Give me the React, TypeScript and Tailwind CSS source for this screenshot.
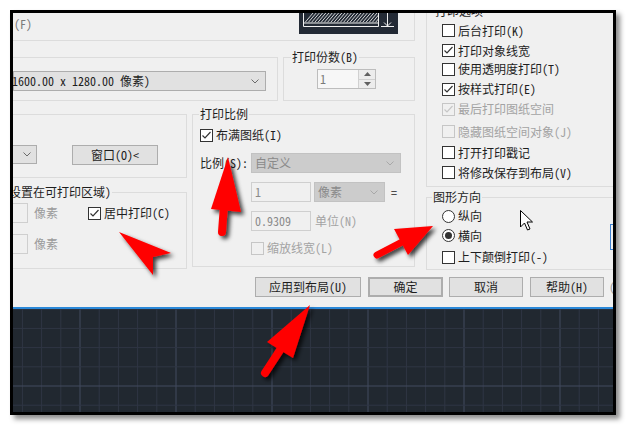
import React from "react";

function Chevron({ color = "#6b6b6b" }: { color?: string }) {
  return (
    <svg width="8" height="5" viewBox="0 0 8 5" className="shrink-0">
      <polyline points="0.5,0.5 4,4 7.5,0.5" fill="none" stroke={color} strokeWidth="1" />
    </svg>
  );
}

function Box({ checked, disabled }: { checked?: boolean; disabled?: boolean }) {
  return (
    <span
      className={`w-[13px] h-[13px] shrink-0 border flex items-center justify-center ${
        disabled ? "border-[#c6c6c6] bg-[#f0f0f0]" : "border-[#333333] bg-white"
      }`}
    >
      {checked && (
        <svg width="11" height="11" viewBox="0 0 11 11">
          <polyline
            points="1.5,5.5 4,8 9.5,2"
            fill="none"
            stroke={disabled ? "#c6c6c6" : "#333333"}
            strokeWidth="1.2"
          />
        </svg>
      )}
    </span>
  );
}

function CheckRow({
  label,
  checked,
  disabled,
  className = "",
}: {
  label: string;
  checked?: boolean;
  disabled?: boolean;
  className?: string;
}) {
  return (
    <div className={`flex items-center h-[14px] ${className}`}>
      <Box checked={checked} disabled={disabled} />
      <span className={`ml-[3px] whitespace-nowrap ${disabled ? "text-[#a3a3a3]" : "text-[#1e1e1e]"}`}>{label}</span>
    </div>
  );
}

function Radio({ label, on, className = "" }: { label: string; on?: boolean; className?: string }) {
  return (
    <div className={`flex items-center h-[14px] ${className}`}>
      <span className="w-[13px] h-[13px] rounded-full border border-[#333333] bg-white flex items-center justify-center shrink-0">
        {on && <span className="w-[7px] h-[7px] rounded-full bg-[#333333]" />}
      </span>
      <span className="ml-[3px] text-[#1e1e1e]">{label}</span>
    </div>
  );
}

function Legend({ children, className = "" }: { children: React.ReactNode; className?: string }) {
  return (
    <span className={`block w-fit -mt-[8px] px-[1px] bg-[#f0f0f0] whitespace-nowrap text-[#1e1e1e] ${className}`}>
      {children}
    </span>
  );
}

function Btn({ children, className = "" }: { children: React.ReactNode; className?: string }) {
  return (
    <div
      className={`h-[20px] shrink-0 flex items-center justify-center bg-[#e1e1e1] border border-[#adadad] text-[#1e1e1e] ${className}`}
    >
      {children}
    </div>
  );
}

function Preview() {
  const hatch = [];
  for (let x = 6; x < 82; x += 3.2) {
    hatch.push(<line key={x} x1={x} y1="9.5" x2={x + 8} y2="0" stroke="#e8e8e8" strokeWidth="0.9" />);
  }
  return (
    <svg width="99" height="21" viewBox="0 0 99 21" className="shrink-0">
      <rect width="99" height="21" fill="#232a35" />
      <clipPath id="hc">
        <rect x="5" y="0" width="74" height="9.5" />
      </clipPath>
      <g clipPath="url(#hc)">{hatch}</g>
      <line x1="4.5" y1="0" x2="4.5" y2="13.5" stroke="#f0f0f0" />
      <line x1="79.5" y1="0" x2="79.5" y2="13.5" stroke="#f0f0f0" />
      <line x1="4.5" y1="10" x2="79.5" y2="10" stroke="#f0f0f0" />
      <line x1="4.5" y1="13.5" x2="79.5" y2="13.5" stroke="#f0f0f0" />
      <line x1="88.5" y1="0" x2="88.5" y2="13" stroke="#f0f0f0" />
      <polyline points="85,9.5 88.5,13 92,9.5" fill="none" stroke="#f0f0f0" />
      <line x1="82" y1="13.5" x2="95" y2="13.5" stroke="#f0f0f0" />
    </svg>
  );
}

function Grid() {
  const lines = [];
  for (let k = -3; k <= 28; k++) {
    const x = 67 + 19.2 * k;
    if (x < 0 || x > 600) continue;
    const major = k % 5 === 0;
    lines.push(
      <line key={"v" + k} x1={x} y1="0" x2={x} y2="103" stroke={major ? "#434b5e" : "#2f3644"} strokeWidth="1" />
    );
  }
  for (let k = -4; k <= 1; k++) {
    const y = 77 + 19.2 * k;
    const major = k % 5 === 0;
    lines.push(
      <line key={"h" + k} x1="0" y1={y} x2="600" y2={y} stroke={major ? "#434b5e" : "#2f3644"} strokeWidth="1" />
    );
  }
  return (
    <svg width="600" height="103" viewBox="0 0 600 103">
      <rect width="600" height="103" fill="#212830" />
      {lines}
    </svg>
  );
}

function Overlay() {
  return (
    <svg className="absolute left-0 top-0 pointer-events-none" width="627" height="427" viewBox="0 0 627 427">
      <defs>
        <filter id="sh" x="-30%" y="-30%" width="160%" height="160%">
          <feDropShadow dx="3" dy="3" stdDeviation="2" floodColor="#000" floodOpacity="0.75" />
        </filter>
      </defs>
      <g filter="url(#sh)" fill="#ff0000">
        {/* offset area */}
        <polygon points="119,232 171,253 153,257 153,275" />
        {/* scale */}
        <line x1="224" y1="205" x2="222" y2="232" stroke="#ff0000" strokeWidth="8" strokeLinecap="round" />
        <polygon points="228,157 241,212 211,209" />
        {/* orientation */}
        <line x1="377" y1="255" x2="402" y2="242" stroke="#ff0000" strokeWidth="7" strokeLinecap="round" />
        <polygon points="433,226 408,255 394,229" />
        {/* apply button */}
        <line x1="282" y1="347" x2="265" y2="373" stroke="#ff0000" strokeWidth="8" strokeLinecap="round" />
        <polygon points="310,305 293,358 267,342" />
      </g>
      <path
        d="M520.5 210.5 L520.5 227 L524.5 223 L527.5 230 L530 229 L527 222 L532.5 222 Z"
        fill="#ffffff"
        stroke="#000000"
        strokeWidth="1"
        strokeLinejoin="round"
      />
    </svg>
  );
}

export default function App() {
  return (
    <div className="relative w-[627px] h-[427px] bg-white overflow-hidden pt-[10px] pl-[10px] font-['Noto_Sans_Mono_CJK_SC','Noto_Sans_CJK_SC',sans-serif] text-[12px] leading-[14px]">
      {/* Frame */}
      <div className="w-[606px] h-[405px] border-[3px] border-black shadow-[4px_4px_5px_rgba(0,0,0,0.45)] overflow-hidden flex flex-col">
        {/* Dialog */}
        <div className="h-[294px] shrink-0 bg-[#f0f0f0] overflow-hidden flex flex-col">
          <div className="h-[264px] shrink-0 flex">
            {/* Left part */}
            <div className="w-[402px] shrink-0 flex flex-col">
              {/* Printer box bottom */}
              <div className="h-[28px] shrink-0 border-b border-r border-[#dcdcdc] flex">
                <span className="w-[286px] shrink-0 pt-[4px] pl-[1px] text-[#7a7a7a]">(F)</span>
                <Preview />
              </div>

              {/* Paper size + copies */}
              <div className="mt-[16px] h-[44px] shrink-0 flex">
                <div className="w-[265px] shrink-0 border-t border-r border-b border-[#dcdcdc]">
                  <div className="mt-[13px] w-[253px] h-[20px] bg-[#e1e1e1] border border-[#adadad] flex items-center justify-between pr-[6px]">
                    <span className="-ml-[2px] whitespace-nowrap text-[#1e1e1e]">1600.00 x 1280.00 像素)</span>
                    <Chevron />
                  </div>
                </div>
                <div className="ml-[5px] w-[132px] shrink-0 border border-[#dcdcdc]">
                  <Legend className="ml-[7px]">打印份数(B)</Legend>
                  <div className="mt-[5px] ml-[33px] w-[59px] h-[20px] border border-[#bdbdbd] bg-[#f7f7f7] flex">
                    <span className="flex-1 pl-[2px] flex items-center text-[#7a7a7a]">1</span>
                    <div className="w-[17px] border-l border-[#d0d0d0] flex flex-col bg-[#ececec]">
                      <div className="flex-1 flex items-center justify-center border-b border-[#d0d0d0]">
                        <svg width="7" height="4" viewBox="0 0 7 4">
                          <polygon points="0,4 3.5,0 7,4" fill="#606060" />
                        </svg>
                      </div>
                      <div className="flex-1 flex items-center justify-center">
                        <svg width="7" height="4" viewBox="0 0 7 4">
                          <polygon points="0,0 3.5,4 7,0" fill="#606060" />
                        </svg>
                      </div>
                    </div>
                  </div>
                </div>
              </div>

              {/* Lower row */}
              <div className="mt-[13px] h-[155px] shrink-0 flex">
                <div className="w-[174px] shrink-0 flex flex-col">
                  {/* Print area */}
                  <div className="h-[64px] shrink-0 border-t border-r border-b border-[#dcdcdc]">
                    <div className="mt-[30px] flex">
                      <div className="w-[24px] h-[19px] bg-[#e1e1e1] border-t border-r border-b border-[#adadad] flex items-center justify-end pr-[5px]">
                        <Chevron />
                      </div>
                      <Btn className="ml-[35px] w-[86px] h-[19px]">窗口(O)&lt;</Btn>
                    </div>
                  </div>
                  {/* Offset */}
                  <div className="mt-[14px] h-[77px] shrink-0 border-t border-r border-b border-[#dcdcdc]">
                    <Legend className="-ml-[5px]">设置在可打印区域)</Legend>
                    <div className="mt-[4px] flex items-center h-[20px]">
                      <div className="w-[15px] h-[20px] border-t border-r border-b border-[#cfcfcf] bg-[#f0f0f0]" />
                      <span className="ml-[6px] text-[#9a9a9a]">像素</span>
                      <CheckRow label="居中打印(C)" checked className="ml-[30px]" />
                    </div>
                    <div className="mt-[11px] flex items-center h-[20px]">
                      <div className="w-[15px] h-[20px] border-t border-r border-b border-[#cfcfcf] bg-[#f0f0f0]" />
                      <span className="ml-[6px] text-[#9a9a9a]">像素</span>
                    </div>
                  </div>
                </div>

                {/* Scale */}
                <div className="ml-[5px] w-[223px] h-[153px] shrink-0 border border-[#dcdcdc]">
                  <Legend className="ml-[6px]">打印比例</Legend>
                  <CheckRow label="布满图纸(I)" checked className="mt-[7px] ml-[7px]" />
                  <div className="mt-[11px] h-[20px] flex items-center">
                    <span className="ml-[7px] w-[51px] text-[#1e1e1e]">比例(S):</span>
                    <div className="w-[150px] h-[20px] bg-[#cccccc] border border-[#c2c2c2] flex items-center justify-between pl-[3px] pr-[6px] text-[#8a8a8a]">
                      <span>自定义</span>
                      <Chevron color="#a8a8a8" />
                    </div>
                  </div>
                  <div className="mt-[9px] h-[20px] flex items-center">
                    <div className="ml-[58px] w-[60px] h-[20px] border border-[#cfcfcf] bg-[#f0f0f0] pl-[3px] flex items-center text-[#8a8a8a]">
                      1
                    </div>
                    <div className="ml-[3px] w-[71px] h-[20px] bg-[#cccccc] border border-[#c2c2c2] flex items-center justify-between pl-[3px] pr-[6px] text-[#8a8a8a]">
                      <span>像素</span>
                      <Chevron color="#a8a8a8" />
                    </div>
                    <span className="ml-[6px] text-[#1e1e1e]">=</span>
                  </div>
                  <div className="mt-[9px] h-[20px] flex items-center">
                    <div className="ml-[58px] w-[60px] h-[20px] border border-[#cfcfcf] bg-[#f0f0f0] pl-[3px] flex items-center text-[#8a8a8a]">
                      0.9309
                    </div>
                    <span className="ml-[4px] text-[#a3a3a3]">单位(N)</span>
                  </div>
                  <CheckRow label="缩放线宽(L)" disabled className="mt-[10px] ml-[58px]" />
                </div>
              </div>
            </div>

            {/* Right part */}
            <div className="ml-[11px] -mt-[2px] w-[200px] shrink-0 flex flex-col">
              <div className="h-[176px] shrink-0 border-t border-l border-b border-[#dcdcdc]">
                <Legend className="ml-[7px]">打印选项</Legend>
                <div className="ml-[15px] flex flex-col">
                  <CheckRow label="后台打印(K)" className="mt-[5.5px]" />
                  <CheckRow label="打印对象线宽" checked className="mt-[6px]" />
                  <CheckRow label="使用透明度打印(T)" className="mt-[4.5px]" />
                  <CheckRow label="按样式打印(E)" checked className="mt-[6px]" />
                  <CheckRow label="最后打印图纸空间" checked disabled className="mt-[6px]" />
                  <CheckRow label="隐藏图纸空间对象(J)" disabled className="mt-[8.5px]" />
                  <CheckRow label="打开打印戳记" className="mt-[7px]" />
                  <CheckRow label="将修改保存到布局(V)" className="mt-[6px]" />
                </div>
              </div>
              <div className="mt-[10px] h-[73px] shrink-0 border-t border-l border-b border-[#dcdcdc]">
                <Legend className="ml-[5px]">图形方向</Legend>
                <div className="flex">
                  <div className="ml-[15px] w-[168px] shrink-0 flex flex-col">
                    <Radio label="纵向" className="mt-[5px]" />
                    <Radio label="横向" on className="mt-[5.5px]" />
                    <CheckRow label="上下颠倒打印(-)" className="mt-[7.5px]" />
                  </div>
                  <div className="mt-[20px] w-[30px] h-[26px] shrink-0 border border-[#3b7fd0]" />
                </div>
              </div>
            </div>
          </div>

          {/* Buttons */}
          <div className="flex items-start">
            <Btn className="ml-[242px] w-[106px]">应用到布局(U)</Btn>
            <Btn className="ml-[7px] w-[75px] border-2 border-[#0078d7]">确定</Btn>
            <Btn className="ml-[6px] w-[74px]">取消</Btn>
            <Btn className="ml-[7px] w-[74px]">帮助(H)</Btn>
            <span className="ml-[5px] h-[20px] flex items-center text-[#9a9a9a]">(</span>
          </div>
        </div>

        {/* Blue divider */}
        <div className="h-[2px] shrink-0 bg-[#2b88d8]" />

        {/* Canvas */}
        <div className="flex-1 overflow-hidden">
          <Grid />
        </div>
      </div>

      <Overlay />
    </div>
  );
}
